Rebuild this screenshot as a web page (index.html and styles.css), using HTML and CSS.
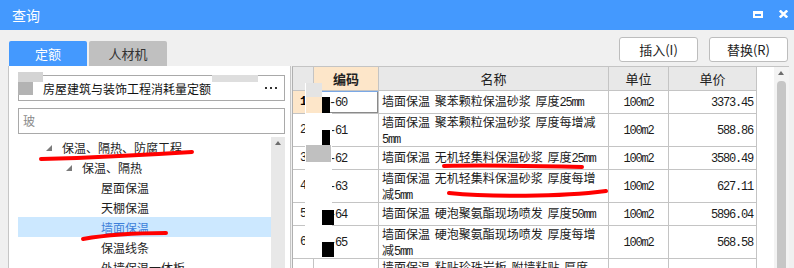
FILE: index.html
```html
<!DOCTYPE html>
<html lang="zh-CN">
<head>
<meta charset="utf-8">
<title>查询</title>
<link rel="stylesheet" href="styles.css">
</head>
<body>
<div class="win">
  <header class="titlebar">
    <span class="title">查询</span>
    <span class="winbtns">
      <svg class="ic-max" width="10" height="7" viewBox="0 0 10 7"><path d="M0,0H10V7H0Z M2,3H8V5H2Z" fill="#fff" fill-rule="evenodd"/></svg>
      <svg class="ic-close" width="9" height="8" viewBox="0 0 9 8"><path d="M0.8,0.5L8.2,7.5M8.2,0.5L0.8,7.5" stroke="#fff" stroke-width="2.4"/></svg>
    </span>
  </header>

  <div class="toolbar">
    <div class="tabs">
      <div class="tab active">定额</div>
      <div class="tab">人材机</div>
    </div>
    <div class="actions">
      <button class="btn">插入(I)</button>
      <button class="btn">替换(R)</button>
    </div>
  </div>

  <div class="main">
    <aside class="left">
      <div class="combo">
        <span class="combo-text">房屋建筑与装饰工程消耗量定额</span>
        <span class="more"><i></i><i></i><i></i></span>
      </div>
      <div class="search">玻</div>
      <div class="tree-wrap">
        <div class="tree">
          <div class="ti l1"><svg class="tri" width="6" height="6" viewBox="0 0 6 6"><path d="M6,0V6H0Z" fill="#7b7b7b"/></svg><span>保温、隔热、防腐工程</span></div>
          <div class="ti l2"><svg class="tri" width="6" height="6" viewBox="0 0 6 6"><path d="M6,0V6H0Z" fill="#7b7b7b"/></svg><span>保温、隔热</span></div>
          <div class="ti l3">屋面保温</div>
          <div class="ti l3">天棚保温</div>
          <div class="ti l3 sel">墙面保温</div>
          <div class="ti l3">保温线条</div>
          <div class="ti l3">外墙保温一体板</div>
        </div>
        <div class="vscroll"><span class="up"></span></div>
      </div>
    </aside>

    <section class="right">
      <table class="grid">
        <colgroup>
          <col class="c-rh"><col class="c-code"><col class="c-name"><col class="c-unit"><col class="c-price">
        </colgroup>
        <thead>
          <tr>
            <th class="rh"></th>
            <th class="hsel">编码</th>
            <th>名称</th>
            <th>单位</th>
            <th>单价</th>
          </tr>
        </thead>
        <tbody>
          <tr class="s">
            <td class="rh rsel">1</td>
            <td class="code focus"><span class="m">-60</span></td>
            <td class="name">墙面保温 聚苯颗粒保温砂浆 厚度<span class="m">25mm</span></td>
            <td class="unit"><span class="m">100m2</span></td>
            <td class="price"><span class="m">3373.45</span></td>
          </tr>
          <tr class="d">
            <td class="rh">2</td>
            <td class="code"><span class="m">-61</span></td>
            <td class="name"><span class="ln">墙面保温 聚苯颗粒保温砂浆 厚度每增减</span><span class="ln"><span class="m">5mm</span></span></td>
            <td class="unit"><span class="m">100m2</span></td>
            <td class="price"><span class="m">588.86</span></td>
          </tr>
          <tr class="s">
            <td class="rh">3</td>
            <td class="code"><span class="m">-62</span></td>
            <td class="name">墙面保温 无机轻集料保温砂浆 厚度<span class="m">25mm</span></td>
            <td class="unit"><span class="m">100m2</span></td>
            <td class="price"><span class="m">3580.49</span></td>
          </tr>
          <tr class="d">
            <td class="rh">4</td>
            <td class="code"><span class="m">-63</span></td>
            <td class="name"><span class="ln">墙面保温 无机轻集料保温砂浆 厚度每增</span><span class="ln">减<span class="m">5mm</span></span></td>
            <td class="unit"><span class="m">100m2</span></td>
            <td class="price"><span class="m">627.11</span></td>
          </tr>
          <tr class="s">
            <td class="rh">5</td>
            <td class="code"><span class="m">-64</span></td>
            <td class="name">墙面保温 硬泡聚氨酯现场喷发 厚度<span class="m">50mm</span></td>
            <td class="unit"><span class="m">100m2</span></td>
            <td class="price"><span class="m">5896.04</span></td>
          </tr>
          <tr class="d">
            <td class="rh">6</td>
            <td class="code"><span class="m">-65</span></td>
            <td class="name"><span class="ln">墙面保温 硬泡聚氨酯现场喷发 厚度每增</span><span class="ln">减<span class="m">5mm</span></span></td>
            <td class="unit"><span class="m">100m2</span></td>
            <td class="price"><span class="m">568.58</span></td>
          </tr>
          <tr class="d">
            <td class="rh"></td>
            <td class="code"></td>
            <td class="name"><span class="ln">墙面保温 粘贴珍珠岩板 附墙粘贴 厚度</span><span class="ln">&nbsp;</span></td>
            <td class="unit"></td>
            <td class="price"></td>
          </tr>
        </tbody>
      </table>
      <div class="filler"></div>
      <div class="gscroll"><span class="up"></span><span class="thumb"></span></div>
    </section>
  </div>

  <!-- redaction blocks present in the screenshot -->
  <div class="cv cv-w1"></div>
  <div class="cv cv-g1"></div>
  <div class="cv cv-g2"></div>
  <div class="cv cv-g3"></div>
  <div class="cv cv-w2"></div>
  <div class="cv cv-w3"></div>
  <div class="cv cv-g4"></div>
  <div class="cv cv-p1"></div>
  <div class="cv cv-b1"></div>
  <div class="cv cv-b2"></div>
  <div class="cv cv-g5"></div>
  <div class="cv cv-b3"></div>
  <div class="cv cv-b4"></div>

  <svg class="marks" width="794" height="268" viewBox="0 0 794 268">
    <g fill="none" stroke="#ff0000" stroke-width="4" stroke-linecap="round">
      <path d="M41,159 C80,158 130,156 192,152"/>
      <path d="M83,239 C100,236 130,233 166,233"/>
      <path d="M444,166 C480,165 540,166 582,167"/>
      <path d="M449,193 C490,197 560,197 606,191"/>
    </g>
  </svg>
</div>
</body>
</html>
```

FILE: styles.css
```css
* { box-sizing: border-box; margin: 0; padding: 0; }

html, body { width: 794px; height: 268px; overflow: hidden; }

body {
  background: #f0f0f0;
  font-family: "Noto Sans CJK SC", "Noto Sans", sans-serif;
  font-size: 12px;
  color: #1b1b1b;
}

.win {
  position: relative;
  width: 794px;
  height: 268px;
  display: flex;
  flex-direction: column;
}

/* title bar */
.titlebar {
  flex: none;
  height: 30px;
  background: #4499fe;
  color: #fff;
  display: flex;
  align-items: center;
  padding: 0 6px 0 12px;
}
.title { font-size: 14px; line-height: 16px; }
.winbtns {
  margin-left: auto;
  display: flex;
  align-items: center;
  gap: 16px;
  margin-bottom: 2px;
}
.winbtns svg { display: block; }

/* toolbar */
.toolbar {
  flex: none;
  height: 36px;
  display: flex;
  justify-content: space-between;
}
.tabs {
  align-self: flex-end;
  display: flex;
  gap: 2px;
  margin-left: 9px;
}
.tab {
  width: 78px;
  height: 25px;
  line-height: 25px;
  text-align: center;
  font-size: 13px;
  background: #c0c0c0;
  color: #333;
  border-radius: 2px 2px 0 0;
}
.tab.active { background: #4499fe; color: #fff; }

.actions {
  display: flex;
  gap: 11px;
  margin: 7px 6px 0 0;
  align-self: flex-start;
}
.btn {
  width: 79px;
  height: 25px;
  background: #fff;
  border: 1px solid #bdbdbd;
  border-radius: 3px;
  font-family: "Noto Sans CJK SC", "Noto Sans", sans-serif;
  font-size: 13px;
  color: #222;
}

/* main */
.main {
  flex: 1;
  min-height: 0;
  display: flex;
}

.left {
  width: 283px;
  margin-left: 8px;
  background: #fff;
  border-left: 1px solid #c6c6c6;
  border-right: 1px solid #c6c6c6;
  padding: 9px 5px 0 9px;
  display: flex;
  flex-direction: column;
}

.combo {
  height: 26px;
  border: 1px solid #a9a9a9;
  display: flex;
  align-items: center;
  padding-left: 24px;
  color: #111;
}
.combo-text { white-space: nowrap; }
.more {
  margin-left: auto;
  margin-right: 7px;
  display: flex;
  gap: 3px;
}
.more i { display: block; width: 2px; height: 2px; background: #333; }

.search {
  margin-top: 7px;
  height: 26px;
  border: 1px solid #a9a9a9;
  padding-left: 4px;
  line-height: 24px;
  color: #8a8a8a;
}

.tree-wrap {
  margin-top: 3px;
  flex: 1;
  min-height: 0;
  display: flex;
}
.tree { flex: 1; overflow: hidden; }
.ti {
  height: 20px;
  display: flex;
  align-items: center;
  white-space: nowrap;
  color: #1e1e1e;
}
.tri { display: block; margin-right: 10px; margin-top: 2px; }
.l1 { padding-left: 28px; }
.l2 { padding-left: 48px; }
.l3 { padding-left: 83px; }
.sel { background: #cce8ff; color: #3d7fd9; }

.vscroll {
  width: 14px;
  background: #e8e8e8;
  position: relative;
}
.vscroll .up, .gscroll .up {
  position: absolute;
  top: 4px;
  left: 4px;
  width: 0;
  height: 0;
  border-left: 3.5px solid transparent;
  border-right: 3.5px solid transparent;
  border-bottom: 4px solid #6d6d6d;
}

/* grid */
.right {
  margin-left: 1px;
  width: 497px;
  border-left: 1px solid #b0b0b0;
  border-top: 1px solid #c4c4c4;
  background: #fff;
  display: flex;
  align-items: flex-start;
  overflow: hidden;
}

.grid {
  flex: none;
  width: 464px;
  table-layout: fixed;
  border-collapse: separate;
  border-spacing: 0;
  font-size: 12px;
}
.c-rh { width: 21px; }
.c-code { width: 65px; }
.c-name { width: 230px; }
.c-unit { width: 60px; }
.c-price { width: 88px; }

.grid th, .grid td {
  border-right: 1px solid #c4c4c4;
  border-bottom: 1px solid #c4c4c4;
  padding: 0 3px;
  line-height: 16px;
  white-space: nowrap;
  overflow: hidden;
  vertical-align: middle;
}
.grid th {
  height: 24px;
  background: #e8e8e8;
  font-weight: normal;
  font-size: 13px;
  color: #222;
}
.grid th.hsel { background: #fde6c9; font-weight: bold; }

.grid tr.s { height: 23px; }
.grid tr.d { height: 33px; }

.m {
  font-family: "Liberation Mono", monospace;
  letter-spacing: -1.2px;
}

.grid td.rh {
  padding: 0 0 0 1px;
  text-align: center;
  font-family: "Liberation Mono", monospace;
  color: #222;
}
.grid td.rsel { background: #fde6c9; font-weight: bold; color: #000; }
.grid td.code { padding-left: 15px; }
.grid td.focus {
  box-shadow: inset 0 1px 0 #7aa8e6, inset -1px -1px 0 #8a8a8a;
}
.grid td.name { padding-left: 3px; word-spacing: 2px; }
.grid td.name .ln { display: block; height: 16px; line-height: 16px; }
.grid td.unit { text-align: center; }
.grid td.price { text-align: right; padding-right: 3px; }

.filler { flex: 1; }

.gscroll {
  flex: none;
  width: 15px;
  height: 202px;
  position: relative;
  background: #f3f3f3;
}
.gscroll .thumb {
  position: absolute;
  left: 3px;
  top: 14px;
  width: 9px;
  height: 190px;
  background: #c6c6c6;
  border-radius: 4px;
}

/* redaction blocks */
.cv { position: absolute; }
.cv-w1 { left: 13px; top: 72px; width: 30px; height: 23px; background: #fff; }
.cv-g1 { left: 18px; top: 72px; width: 25px; height: 10px; background: #d4d4d4; }
.cv-g2 { left: 18px; top: 82px; width: 15px; height: 13px; background: #b3b3b3; }
.cv-g3 { left: 212px; top: 75px; width: 46px; height: 7px; background: #dedede; }
.cv-w2 { left: 305px; top: 113px; width: 27px; height: 145px; background: #fff; }
.cv-w3 { left: 305px; top: 83px; width: 1px; height: 30px; background: #fff; }
.cv-g4 { left: 306px; top: 83px; width: 16px; height: 14px; background: #e4e4e4; }
.cv-p1 { left: 306px; top: 97px; width: 16px; height: 16px; background: #fde6c9; }
.cv-b1 { left: 322px; top: 97px; width: 8px; height: 16px; background: #000; }
.cv-b2 { left: 322px; top: 130px; width: 8px; height: 15px; background: #000; }
.cv-g5 { left: 306px; top: 145px; width: 25px; height: 17px; background: #c0c0c0; }
.cv-b3 { left: 322px; top: 210px; width: 12px; height: 15px; background: #000; }
.cv-b4 { left: 322px; top: 242px; width: 12px; height: 15px; background: #000; }

.marks {
  position: absolute;
  left: 0;
  top: 0;
  pointer-events: none;
}
```
